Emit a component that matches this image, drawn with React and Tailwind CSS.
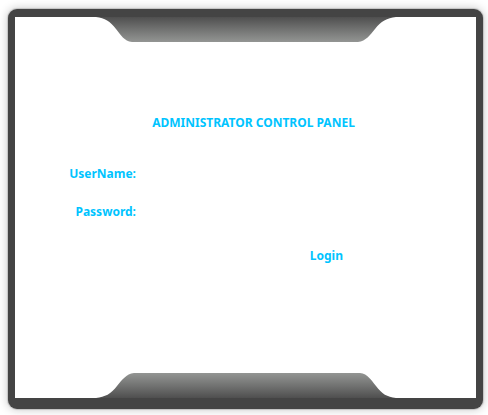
function FrameTab({ flipped = false }) {
  return (
    <svg
      viewBox="0 0 300 25"
      aria-hidden="true"
      className={flipped ? "mx-auto block h-[25px] w-[300px] rotate-180" : "mx-auto block h-[25px] w-[300px]"}
    >
      <defs>
        <linearGradient id={flipped ? "tab-bottom" : "tab-top"} x1="0" y1="0" x2="0" y2="1">
          <stop offset="0" stopColor="#4f4f4f" />
          <stop offset="0.5" stopColor="#727372" />
          <stop offset="1" stopColor="#939593" />
        </linearGradient>
      </defs>
      <path
        d="M0 0C9 1 14 4 20 12C25 18 28 24 36 25H262C270 24 274 18 279 12C285 4 291 1 300 0Z"
        fill={flipped ? "url(#tab-bottom)" : "url(#tab-top)"}
      />
    </svg>
  );
}

function Field({ id, label, type }) {
  return (
    <div className="flex items-center gap-3 pr-24 leading-4">
      <label htmlFor={id} className="w-[121px] shrink-0 text-right">
        {label}
      </label>
      <input id={id} name={id} type={type} className="h-4 min-w-0 flex-1 bg-transparent outline-none" />
    </div>
  );
}

export default function App() {
  return (
    <main className="bg-white pt-[9px] pr-[5px] pb-[6px] pl-2">
      <div className="rounded-[9px] bg-[#444444] px-[7px] pt-2 pb-[11px] shadow-[0_0_1px_1px_rgba(0,0,0,0.15),0_0_10px_1px_rgba(0,0,0,0.2)]">
        <div className="bg-white">
          <FrameTab />
          <form
            onSubmit={(event) => event.preventDefault()}
            className="pt-[73px] pb-[109px] font-['Noto_Sans',sans-serif] text-[12px] leading-4 font-bold text-[#00c4ff]"
          >
            <h1 className="pl-4 text-center">ADMINISTRATOR CONTROL PANEL</h1>
            <div className="mt-[35px] flex flex-col gap-[22px]">
              <Field id="username" label="UserName:" type="text" />
              <Field id="password" label="Password:" type="password" />
            </div>
            <div className="mt-7 flex justify-end pr-[133px]">
              <button type="submit">Login</button>
            </div>
          </form>
          <FrameTab flipped />
        </div>
      </div>
    </main>
  );
}
